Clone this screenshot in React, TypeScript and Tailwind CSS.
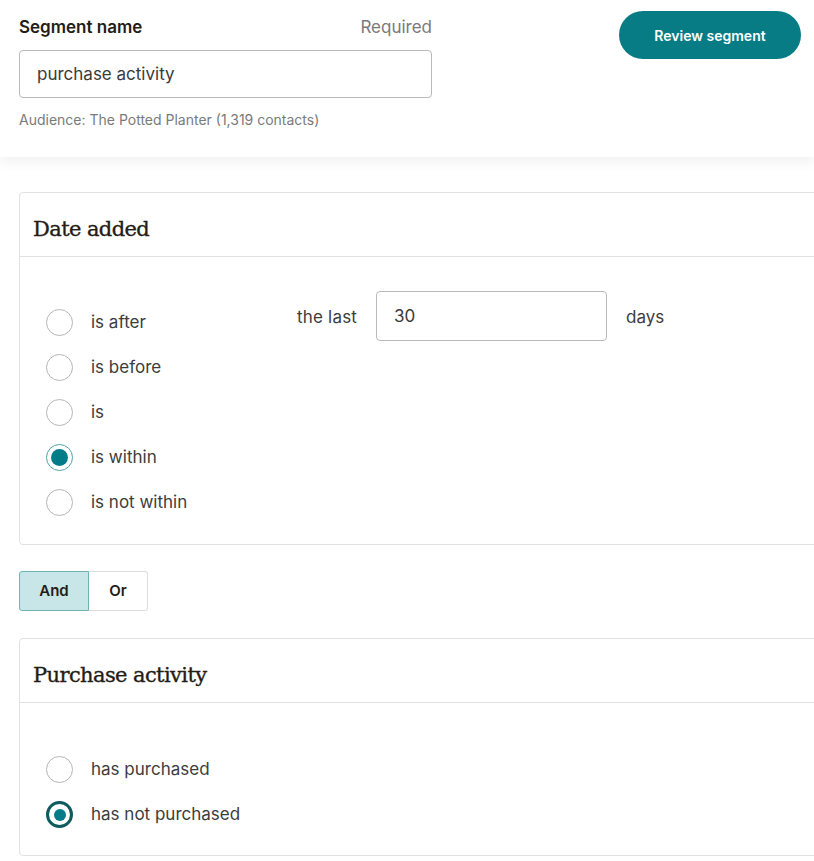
import { useState } from 'react';

const sans = "font-['Inter','Liberation_Sans',Arial,sans-serif]";
const serif = "font-['DejaVu_Serif',Georgia,serif]";

function Radio({ label, checked, strong, onClick }: { label: string; checked?: boolean; strong?: boolean; onClick?: () => void }) {
  let circle = 'border-[1.5px] border-[#b5b5b5] bg-white';
  if (checked && strong) circle = 'border-[3px] border-[#0f5b5e] bg-white';
  else if (checked) circle = 'border-[1.5px] border-[#4fa3aa] bg-white';

  return (
    <button onClick={onClick} className="flex items-center h-[45px] gap-[18px] text-left">
      <span className={`w-[27px] h-[27px] rounded-full flex items-center justify-center shrink-0 ${circle}`}>
        {checked && <span className={`rounded-full bg-[#007c89] ${strong ? 'w-[12px] h-[12px]' : 'w-[17px] h-[17px]'}`} />}
      </span>
      <span className="text-[17px] text-[#3c3c3c]">{label}</span>
    </button>
  );
}

function Card({ title, children }: { title: string; children: React.ReactNode }) {
  return (
    <div className="w-[840px] border border-[#e1e1e1] rounded-[4px] bg-white">
      <div className="h-[64px] border-b border-[#e1e1e1] pl-[13px] pt-[23px]">
        <h2 className={`${serif} text-[21px] leading-[26px] tracking-[-0.6px] text-[#241c15] [-webkit-text-stroke:0.35px_#241c15]`}>{title}</h2>
      </div>
      {children}
    </div>
  );
}

export default function App() {
  const [date, setDate] = useState('is within');
  const [purchase, setPurchase] = useState('has not purchased');
  const [join, setJoin] = useState<'and' | 'or'>('and');

  return (
    <div className={`min-h-screen bg-white overflow-hidden ${sans} text-[#241c15]`}>
      <header className="relative flex justify-between pl-[19px] pr-[13px] pt-[11px] pb-[29px] bg-white shadow-[0_5px_12px_rgba(0,0,0,0.06)]">
        <div className="w-[413px] pt-[6px]">
          <div className="flex justify-between items-baseline leading-[20px]">
            <label className="text-[17px] font-semibold text-[#241c15]">Segment name</label>
            <span className="text-[17px] text-[#7a7a7a]">Required</span>
          </div>
          <input
            defaultValue="purchase activity"
            className="mt-[13px] w-full h-[48px] border border-[#b9b9b9] rounded-[4px] px-[17px] text-[17px] text-[#3a3a3a] outline-none"
          />
          <p className="mt-[14px] text-[14px] leading-[16px] text-[#7a7a7a]">Audience: The Potted Planter (1,319 contacts)</p>
        </div>
        <button className="w-[182px] h-[48px] rounded-full bg-[#087c85] text-white text-[14px] font-semibold">
          Review segment
        </button>
      </header>

      <main className="pl-[19px] pt-[35px] pb-10">
        <Card title="Date added">
          <div className="flex pl-[26px] pt-[34px] pb-[19px]">
            <div className="w-[251px] pt-[9px] flex flex-col">
              {['is after', 'is before', 'is', 'is within', 'is not within'].map((o) => (
                <Radio key={o} label={o} checked={date === o} onClick={() => setDate(o)} />
              ))}
            </div>
            <div className="flex items-center h-[50px] gap-[19px]">
              <span className="text-[17px] text-[#3c3c3c] pt-[3px] tracking-[0.2px]">the last</span>
              <input
                defaultValue="30"
                className="w-[231px] h-[50px] border border-[#b9b9b9] rounded-[4px] px-[17px] text-[17px] text-[#3a3a3a] outline-none"
              />
              <span className="text-[17px] text-[#3c3c3c] pt-[3px]">days</span>
            </div>
          </div>
        </Card>

        <div className="mt-[26px] flex h-[40px]">
          <button
            onClick={() => setJoin('and')}
            className={`w-[70px] rounded-l-[3px] border text-[15px] font-semibold ${join === 'and' ? 'bg-[#c8e5e7] border-[#6fb3b9] text-[#241c15]' : 'bg-white border-[#dcdcdc]'}`}
          >
            And
          </button>
          <button
            onClick={() => setJoin('or')}
            className={`w-[59px] rounded-r-[3px] border border-l-0 text-[15px] font-semibold ${join === 'or' ? 'bg-[#c8e5e7] border-[#6fb3b9]' : 'bg-white border-[#dcdcdc] text-[#241c15]'}`}
          >
            Or
          </button>
        </div>

        <div className="mt-[27px]">
          <Card title="Purchase activity">
            <div className="pl-[26px] pt-[44px] pb-[18px] flex flex-col">
              {['has purchased', 'has not purchased'].map((o) => (
                <Radio key={o} label={o} checked={purchase === o} strong onClick={() => setPurchase(o)} />
              ))}
            </div>
          </Card>
        </div>
      </main>
    </div>
  );
}
